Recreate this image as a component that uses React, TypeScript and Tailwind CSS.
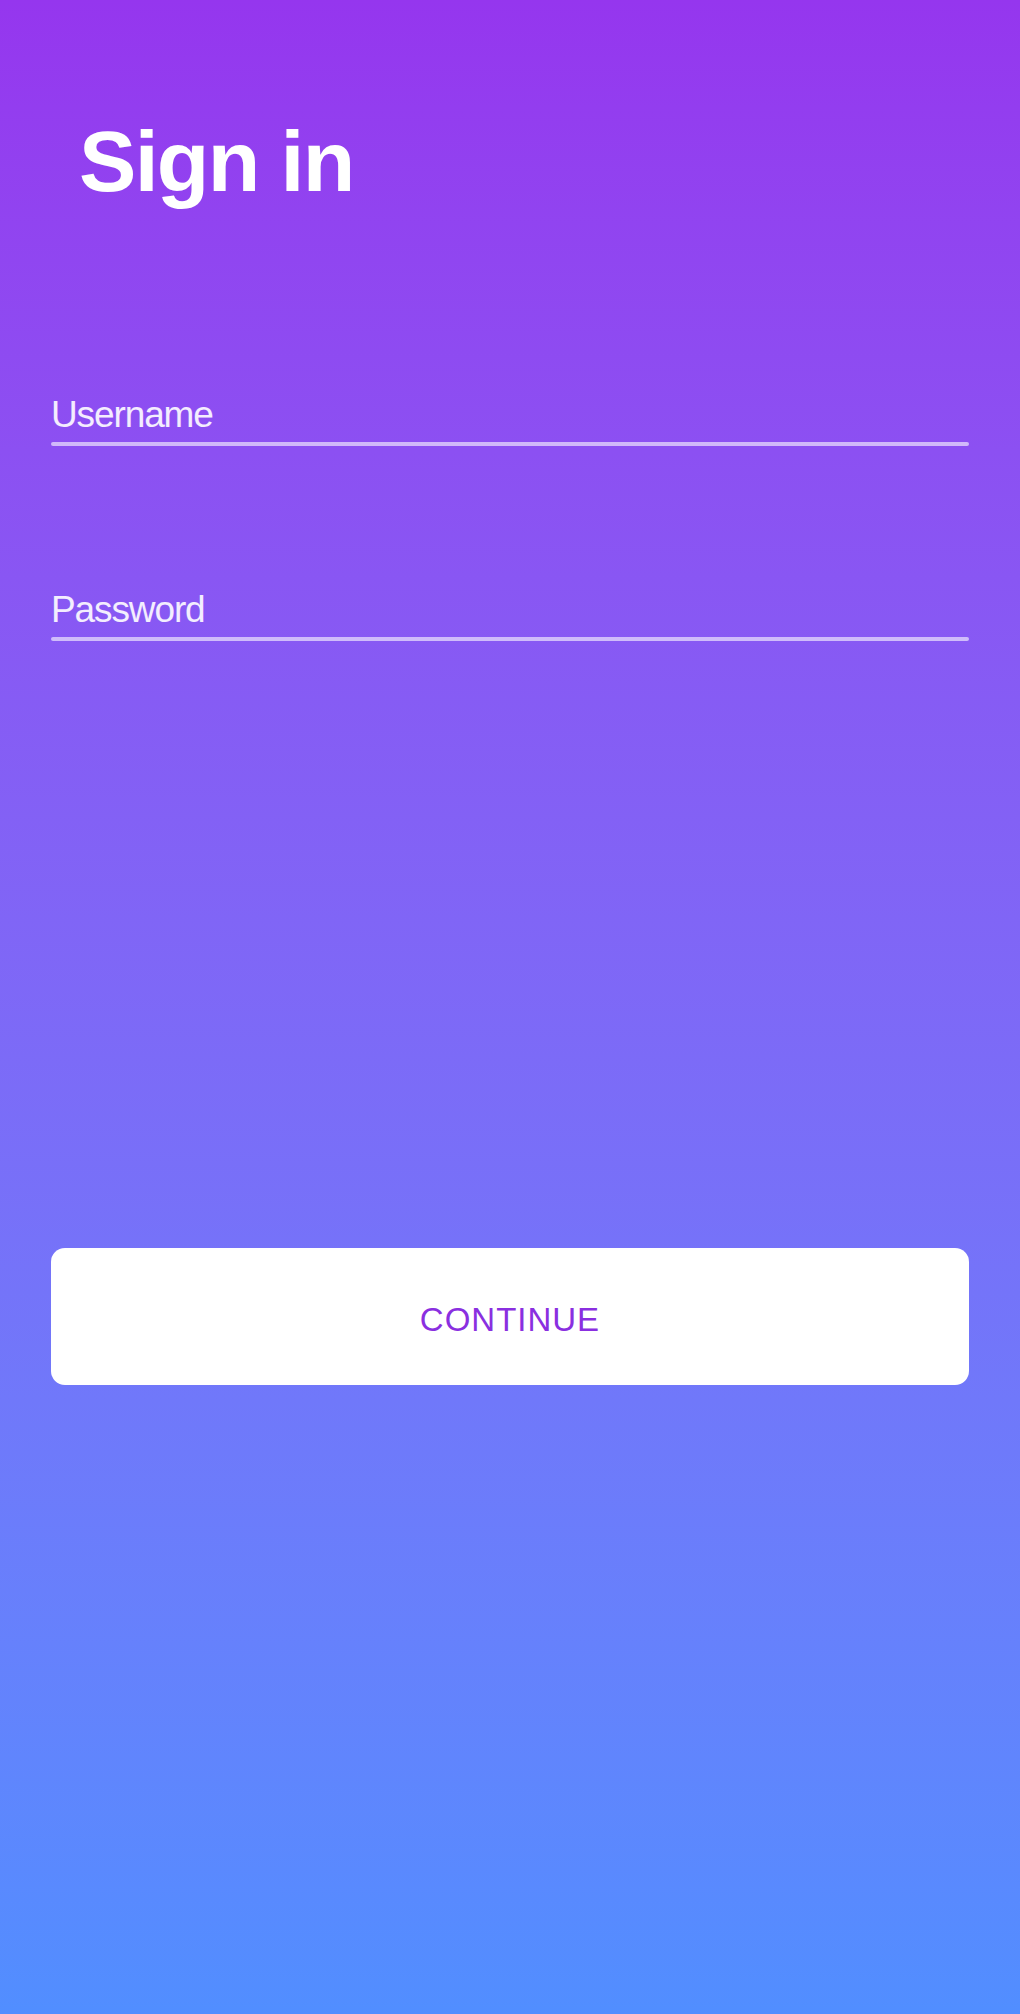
export default function App() {
  return (
    <div className="flex min-h-[2014px] w-full flex-col bg-gradient-to-b from-[#9536ee] to-[#518eff] font-['Liberation_Sans',Arial,sans-serif] text-white">
      {/* Header */}
      <h1 className="pl-[79px] pt-[118px] text-[86px] font-bold leading-none tracking-[-0.02em]">
        Sign in
      </h1>

      <form className="flex flex-col px-[51px] pt-[192px]">
        <div>
          <label className="block text-[37px] leading-none tracking-[-0.03em] text-white/90">
            Username
          </label>
          <div className="mt-[9px] h-[4px] w-full rounded-full bg-white/60" />
        </div>

        <div className="mt-[145px]">
          <label className="block text-[37px] leading-none tracking-[-0.03em] text-white/90">
            Password
          </label>
          <div className="mt-[9px] h-[4px] w-full rounded-full bg-white/60" />
        </div>

        <button
          type="button"
          className="mt-[607px] flex h-[137px] w-full items-center justify-center rounded-[14px] bg-white pt-[6px] text-[33px] font-medium tracking-[0.03em] text-[#8a2fe0]"
        >
          CONTINUE
        </button>
      </form>
    </div>
  );
}
